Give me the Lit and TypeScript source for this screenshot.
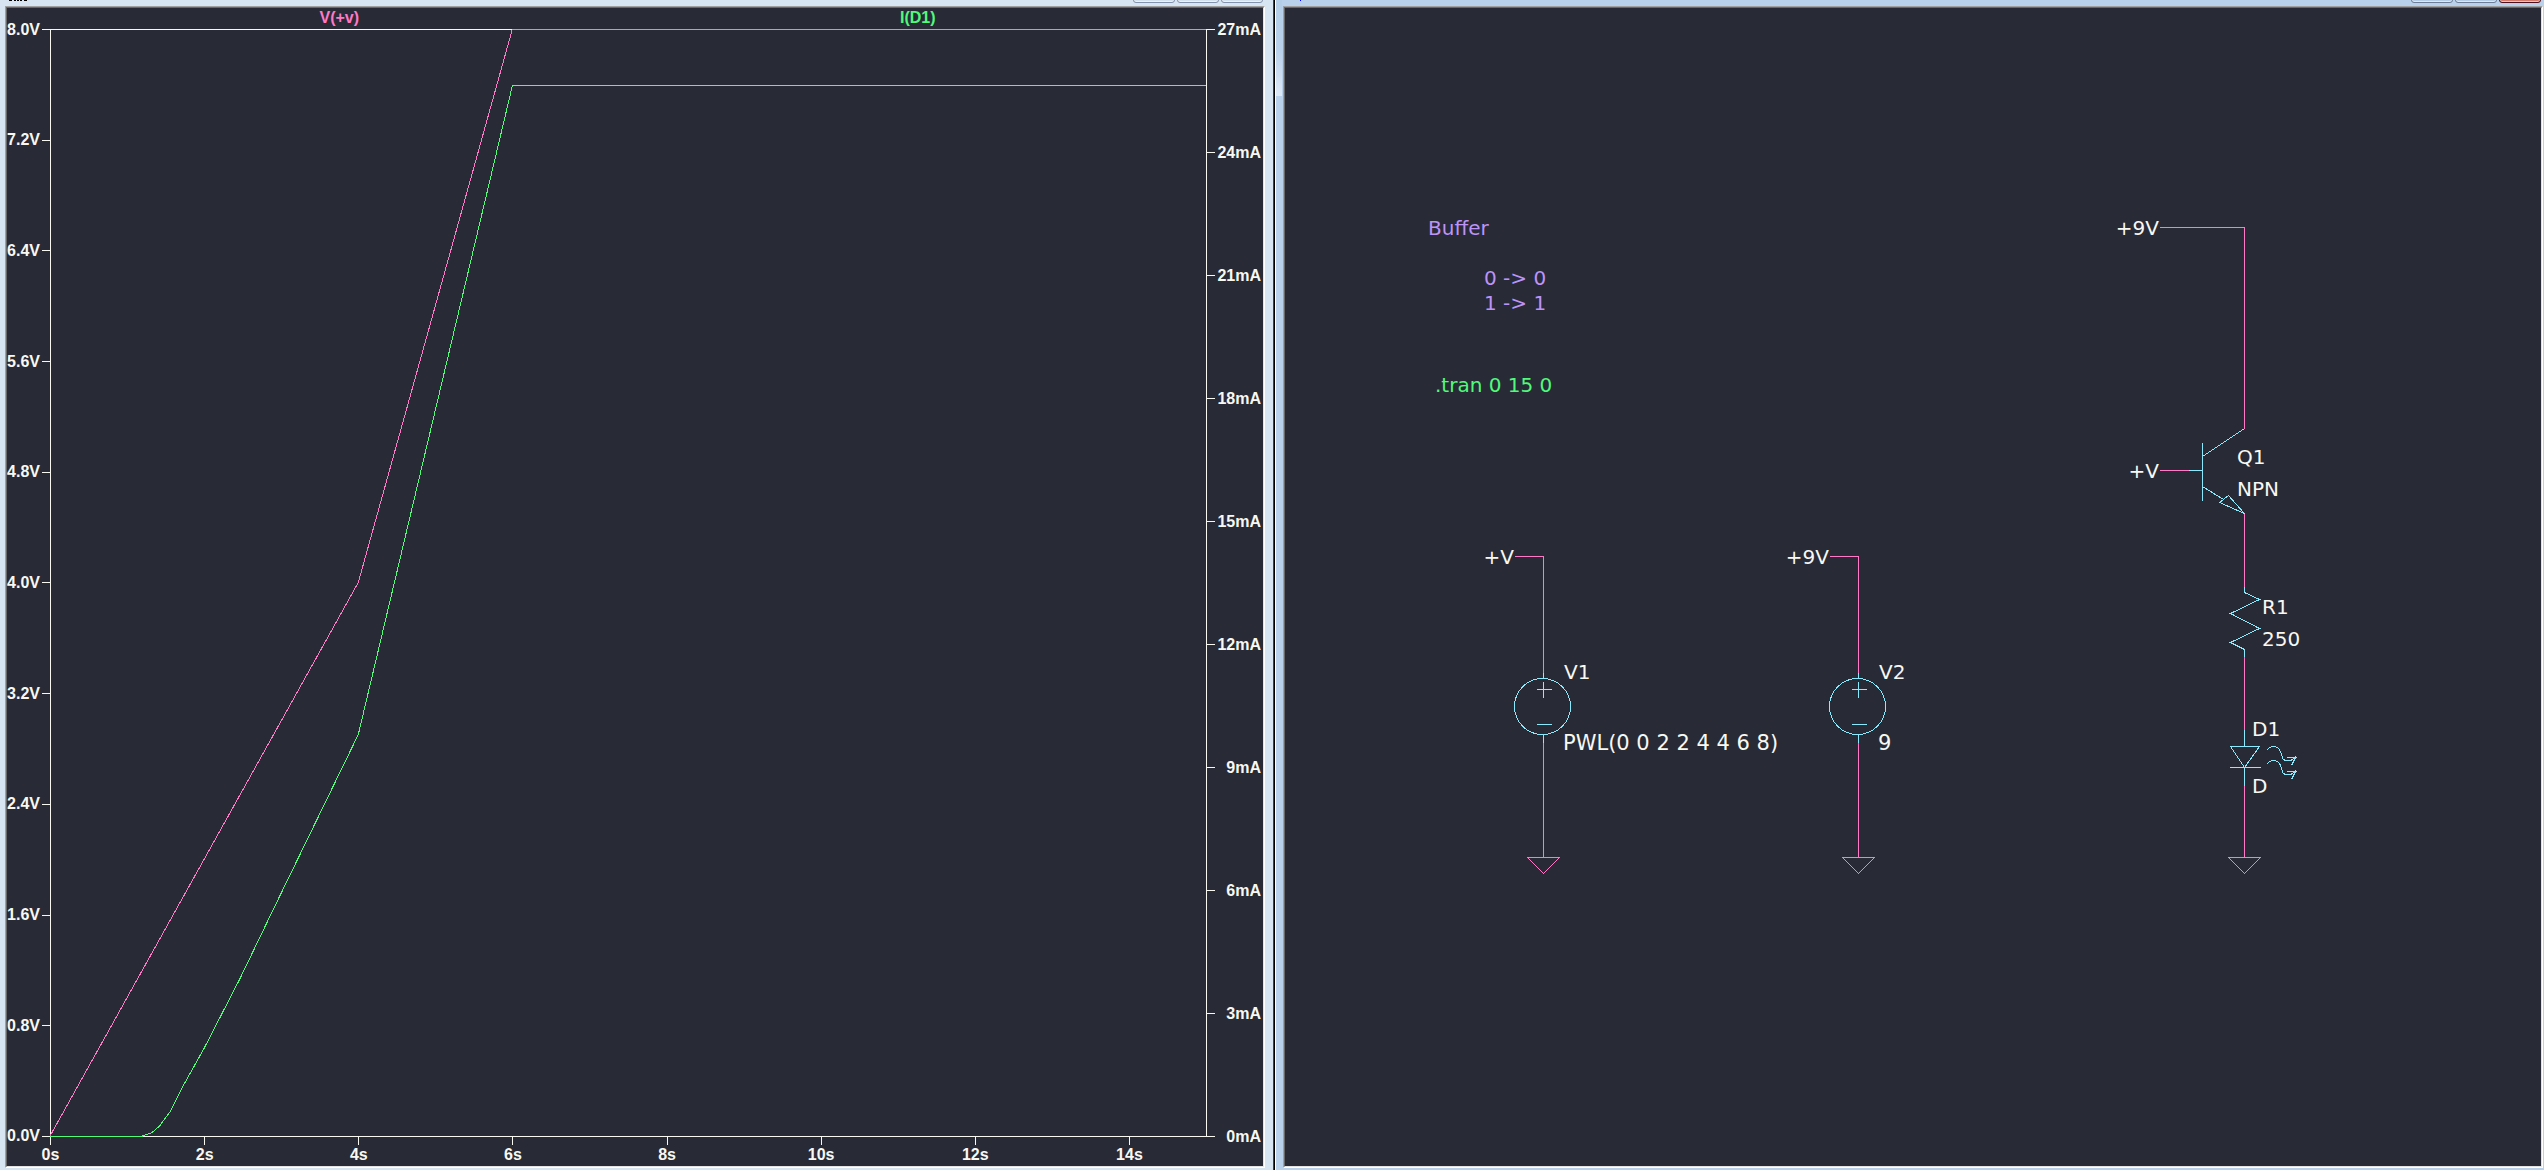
import { LitElement, html, svg, css } from "lit";
import { customElement } from "lit/decorators.js";

type Point = [number, number];

const DURATION = 15;
const VOLT_MAX = 8;
const MILLIAMP_MAX = 27;

const voltTicks = ["8.0V", "7.2V", "6.4V", "5.6V", "4.8V", "4.0V", "3.2V", "2.4V", "1.6V", "0.8V", "0.0V"];
const currentTicks = ["27mA", "24mA", "21mA", "18mA", "15mA", "12mA", "9mA", "6mA", "3mA", "0mA"];
const timeTicks = ["0s", "2s", "4s", "6s", "8s", "10s", "12s", "14s"];

const voltage: Point[] = [[0, 0], [4, 4], [6, 8], [15, 8]];
const current: Point[] = [
  [0, 0], [1.2, 0], [1.32, 0.08], [1.42, 0.24], [1.56, 0.6], [1.7, 1.13], [1.84, 1.6],
  [2, 2.14], [2.46, 3.82], [2.96, 5.77], [4, 9.79], [6, 25.62], [15, 25.62],
];

/** Maps samples onto a DURATION x 100 box whose y axis points down. */
const trace = (points: Point[], max: number) =>
  points.map(([t, v]) => `${t},${(100 * (1 - v / max)).toFixed(2)}`).join(" ");

@customElement("mdi-window")
class MdiWindow extends LitElement {
  static properties = { active: { type: Boolean, reflect: true } };

  static styles = css`
    :host {
      display: grid;
      grid-template-rows: 6px 1fr;
      box-sizing: border-box;
      min-width: 0;
      padding: 0 8px 2px 5px;
      background: #d7e4f2;
    }
    :host([active]) {
      padding: 0 1px 2px 7px;
      border-left: 1px solid #ffffff;
      background: linear-gradient(#b5cee8, #b9d1ea 50px, #dfe9f6) 0 0 / 6px 96px no-repeat, #b9d1ea;
    }
    .title {
      display: flex;
      justify-content: space-between;
      align-items: flex-end;
      overflow: hidden;
    }
    .mark {
      width: 24px;
      height: 6px;
    }
    .buttons {
      display: flex;
      gap: 2px;
      padding: 0 2px 3px 0;
    }
    button {
      box-sizing: border-box;
      width: 42px;
      height: 20px;
      padding: 0;
      border: 1px solid #8391aa;
      border-radius: 3px;
      background: #d3e0ee;
      box-shadow: inset 0 0 0 1px #e9f1fa;
    }
    :host([active]) button {
      border-color: #6d7d98;
      background: #b4cce6;
      box-shadow: inset 0 0 0 1px #dbe8f6;
    }
    :host([active]) .close {
      border-color: #4c1220;
      background: #d47a6c;
      box-shadow: inset 0 0 0 1px #efc0b8;
    }
    .client {
      display: grid;
      min-width: 0;
      border: 1px solid;
      border-color: #a0a0a0 #ffffff #ffffff #a0a0a0;
    }
    .well {
      display: grid;
      min-width: 0;
      border: 1px solid;
      border-color: #696969 #e3e3e3 #e3e3e3 #696969;
      background: #282a36;
    }
  `;

  declare active: boolean;

  render() {
    return html`
      <div class="title">
        <svg class="mark" viewBox="0 0 24 6" shape-rendering="crispEdges" aria-hidden="true">
          ${this.active
            ? svg`<rect x="17" y="0" width="1" height="1" fill="#0000ff" />`
            : svg`<path d="M4 0h3M9 0h2M12 0h2M15 0h2M19 0h3" stroke="#000000" stroke-width="2" />`}
        </svg>
        <div class="buttons">
          <button aria-label="Minimize"></button>
          <button aria-label="Maximize"></button>
          <button class="close" aria-label="Close"></button>
        </div>
      </div>
      <div class="client"><div class="well"><slot></slot></div></div>
    `;
  }
}

@customElement("wave-plot")
class WavePlot extends LitElement {
  static styles = css`
    :host {
      display: grid;
      grid-template-columns: 43px 1fr 56px;
      grid-template-rows: 21px 1fr 29px;
      min-width: 0;
      color: #f8f8f2;
      font: bold 16px/18px "Liberation Sans", Arial, sans-serif;
    }
    .legend {
      grid-column: 2;
      display: grid;
      grid-template-columns: 1fr 1fr;
      justify-items: center;
      line-height: 20px;
    }
    .volts {
      color: #ff79c6;
    }
    .amps {
      color: #50fa7b;
    }
    .axis {
      grid-row: 2;
      display: flex;
      flex-direction: column;
      justify-content: space-between;
    }
    .left {
      grid-column: 1;
    }
    .right {
      grid-column: 3;
    }
    .tick {
      display: flex;
      align-items: center;
      height: 1px;
      white-space: nowrap;
    }
    .left .tick {
      justify-content: flex-end;
      gap: 2px;
    }
    .right .tick {
      justify-content: space-between;
      padding-right: 2px;
    }
    .dash {
      width: 8px;
      height: 1px;
      background: #f8f8f2;
    }
    .area {
      grid-column: 2;
      grid-row: 2;
      position: relative;
      min-width: 0;
      min-height: 0;
      border: 1px solid #f8f8f2;
    }
    .traces {
      position: absolute;
      top: -1px;
      left: -1px;
      width: calc(100% + 1px);
      height: calc(100% + 1px);
      overflow: visible;
      fill: none;
      stroke-width: 1px;
    }
    .traces polyline {
      vector-effect: non-scaling-stroke;
      stroke: currentColor;
    }
    .time {
      grid-column: 2;
      grid-row: 3;
      display: grid;
      grid-template-columns: repeat(7, 2fr) 1fr;
      margin-right: 1px;
    }
    .stamp {
      display: flex;
      flex-direction: column;
      align-items: center;
      gap: 1px;
      width: 1px;
      white-space: nowrap;
    }
    .stem {
      width: 1px;
      height: 8px;
      background: #f8f8f2;
    }
  `;

  render() {
    return html`
      <div class="legend"><span class="volts">V(+v)</span><span class="amps">I(D1)</span></div>
      <div class="axis left">
        ${voltTicks.map((t) => html`<div class="tick"><span>${t}</span><i class="dash"></i></div>`)}
      </div>
      <div class="area">
        <svg class="traces" viewBox="0 0 ${DURATION} 100" preserveAspectRatio="none" shape-rendering="crispEdges" role="img" aria-label="V(+v) and I(D1) over time">
          <polyline class="volts" points=${trace(voltage, VOLT_MAX)} />
          <polyline class="amps" points=${trace(current, MILLIAMP_MAX)} />
        </svg>
      </div>
      <div class="axis right">
        ${currentTicks.map((t) => html`<div class="tick"><i class="dash"></i><span>${t}</span></div>`)}
      </div>
      <div class="time">
        ${timeTicks.map((t) => html`<div class="stamp"><i class="stem"></i><span>${t}</span></div>`)}
      </div>
    `;
  }
}

@customElement("circuit-schematic")
class CircuitSchematic extends LitElement {
  static styles = css`
    :host {
      display: grid;
      min-width: 0;
    }
    .sheet {
      width: 100%;
      height: 100%;
      min-height: 880px;
      fill: none;
      stroke-width: 1px;
    }
    .wire {
      stroke: #ff79c6;
    }
    .part {
      stroke: #8be9fd;
    }
    text {
      fill: #f8f8f2;
      font: 20px "DejaVu Sans", Verdana, sans-serif;
    }
    .net {
      text-anchor: end;
    }
    .value {
      font-size: 21px;
    }
    .comment {
      fill: #bd93f9;
    }
    .directive {
      fill: #50fa7b;
    }
  `;

  private ground(x: number) {
    return svg`<path class="wire" d="M${x - 16} 849h32l-16 16z" />`;
  }

  private source(x: number) {
    return svg`
      <path class="wire" d="M${x - 29} 548H${x}V664M${x} 734V849" />
      <path class="part" d="M${x} 664v6M${x} 726v8M${x - 7} 681h15M${x} 673v16M${x - 7} 716h15" />
      <circle class="part" cx=${x - 1} cy="698" r="28" />
      ${this.ground(x)}
    `;
  }

  private sourceText(x: number, net: string, name: string, value: string) {
    return svg`
      <text class="net" x=${x - 29} y="556">${net}</text>
      <text x=${x + 21} y="671">${name}</text>
      <text class="value" x=${x + 20} y="742">${value}</text>
    `;
  }

  private ray(y: number) {
    return svg`<path class="part" d="M981 ${y + 3}q3 -4 7 -4q5 0 7 5t2 7q3 3 7 2q3 0 6 -4M1001 ${y + 10}h10M1010 ${y + 10}l-4 8" />`;
  }

  render() {
    return html`
      <svg class="sheet" shape-rendering="crispEdges" role="img" aria-label="Buffer circuit">
        <g transform="translate(0.5 0.5)">
          ${this.source(258)}
          ${this.source(573)}

          <path class="wire" d="M874 219H959V420M874 462H903M959 505V578M959 648V721M959 777V849" />
          <path class="part" d="M903 462H917M917 434V492M917 448L959 420M917 478L938 491M934 494L943 487L959 505Z" />
          <path class="part" d="M959 578V584L974 591L945 605L974 620L945 634L959 641V648" />
          <path class="part" d="M959 721V738M945 738H974L959 759ZM944 759H975M959 759V777" />
          ${this.ray(739)} ${this.ray(753)} ${this.ground(959)}
        </g>

        ${this.sourceText(258, "+V", "V1", "PWL(0 0 2 2 4 4 6 8)")}
        ${this.sourceText(573, "+9V", "V2", "9")}

        <text class="net" x="874" y="227">+9V</text>
        <text class="net" x="874" y="470">+V</text>
        <text x="952" y="456">Q1</text>
        <text x="952" y="488">NPN</text>
        <text x="977" y="606">R1</text>
        <text x="977" y="638">250</text>
        <text x="967" y="728">D1</text>
        <text x="967" y="785">D</text>

        <text class="comment" x="143" y="227">Buffer</text>
        <text class="comment" x="199" y="277">0 -&gt; 0</text>
        <text class="comment" x="199" y="302">1 -&gt; 1</text>
        <text class="directive" x="150" y="384">.tran 0 15 0</text>
      </svg>
    `;
  }
}

@customElement("app-root")
class AppRoot extends LitElement {
  static styles = css`
    :host {
      display: grid;
      grid-template-columns: 1273fr 2px 1269fr;
      min-height: 100vh;
      overflow: hidden;
    }
    .split {
      background: #000000;
      box-shadow: inset 1px 0 0 #404040;
    }
  `;

  render() {
    return html`
      <mdi-window><wave-plot></wave-plot></mdi-window>
      <div class="split"></div>
      <mdi-window active><circuit-schematic></circuit-schematic></mdi-window>
    `;
  }
}
